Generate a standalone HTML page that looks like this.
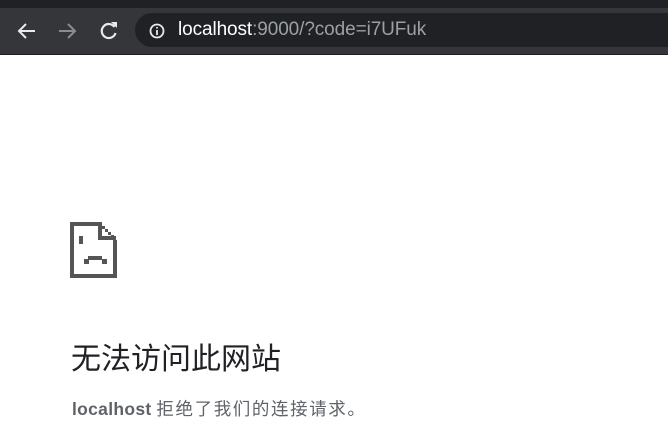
<!DOCTYPE html>
<html><head><meta charset="utf-8"><style>
html,body{margin:0;padding:0;width:668px;height:427px;overflow:hidden;background:#fff;font-family:"Liberation Sans","Noto Sans CJK SC",sans-serif}
.top{position:absolute;left:0;top:0;width:668px;height:8px;background:#202124}
.bar{position:absolute;left:0;top:8px;width:668px;height:46px;background:#35363a;border-bottom:1px solid #1f1f1f}
.omni{position:absolute;left:135px;top:13px;width:560px;height:34px;border-radius:17px;background:#202124}
.url{position:absolute;left:178px;top:19px;font-size:19px;color:#9aa0a6;letter-spacing:-0.1px}
.url b{font-weight:normal;color:#fff}
h1{position:absolute;left:71px;top:334px;margin:0;font-size:30px;font-weight:normal;color:#202124}
p{position:absolute;left:72px;top:396px;margin:0;font-size:17.5px;color:#5f6368}
p b{color:#5f6368;letter-spacing:0.3px}
p span{letter-spacing:1.6px}
</style></head><body>
<div class="top"></div>
<div class="bar"></div>
<div class="omni"></div>
<svg style="position:absolute;left:0;top:8px" width="180" height="46">
<g stroke="#e8eaed" stroke-width="2" fill="none">
<path d="M35 23H19M26 16l-7 7 7 7"/>
</g>
<g stroke="#8a8c90" stroke-width="2" fill="none"><path d="M59 23h16M68 16l7 7-7 7"/></g>
<g stroke="#e8eaed" stroke-width="2.2" fill="none"><path d="M114.5 19a7 7 0 1 0 1 6"/></g>
<path d="M111 14h6v6z" fill="#e8eaed"/>
<circle cx="157" cy="23" r="6.5" stroke="#e8eaed" stroke-width="1.8" fill="none"/>
<path d="M157 22v5M157 19v1.5" stroke="#e8eaed" stroke-width="1.8"/>
</svg>
<div class="url"><b>localhost</b>:9000/?code=i7UFuk</div>
<svg style="position:absolute;left:70px;top:222px" width="48" height="58" fill="#555">
<rect x="0" y="0" width="29" height="4"/>
<rect x="0" y="0" width="4" height="56"/>
<rect x="0" y="52" width="47" height="4"/>
<rect x="43" y="18" width="4" height="38"/>
<rect x="28" y="0" width="4" height="18"/>
<rect x="28" y="14" width="18" height="4"/>
<rect x="32" y="4" width="3" height="3"/>
<rect x="35" y="7" width="3" height="3"/>
<rect x="38" y="10" width="3" height="3"/>
<rect x="41" y="13" width="3" height="3"/>
<rect x="9" y="14" width="4" height="8"/>
<rect x="18" y="34" width="14" height="4"/>
<rect x="14" y="37" width="5" height="5"/>
<rect x="32" y="37" width="5" height="5"/>
</svg>
<h1>无法访问此网站</h1>
<p><b>localhost</b> <span>拒绝了我们的连接请求。</span></p>
</body></html>
